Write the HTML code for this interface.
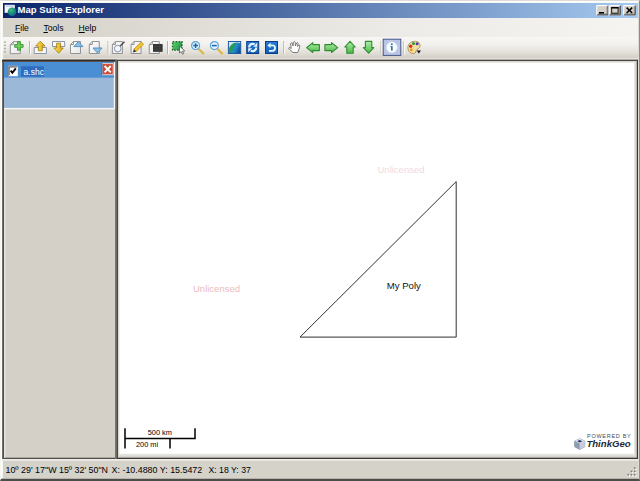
<!DOCTYPE html>
<html><head><meta charset="utf-8"><title>Map Suite Explorer</title>
<style>
html,body{margin:0;padding:0;}
body{width:640px;height:481px;overflow:hidden;background:#d4d0c8;position:relative;font-family:"Liberation Sans",sans-serif;font-size:8.6px;color:#000;}
.abs{position:absolute;}
#frame{left:0;top:0;width:640px;height:481px;background:#d5d2ca;box-sizing:border-box;border-style:solid;border-width:1px 1px 2px 1px;border-color:#dedbd6 #8e8c86 #4e4c48 #f4f4f0;}
#frame2{left:1px;top:1px;width:638px;height:478px;box-sizing:border-box;border:1px solid;border-color:#ffffff #dedbd5 #b4b2aa #ffffff;}
#title{left:3px;top:3px;width:634.5px;height:14.6px;background:linear-gradient(to right,#0a246a 0%,#a6caf0 100%);}
#title .t{left:14.6px;top:0;height:14.6px;line-height:14.6px;color:#fff;font-weight:bold;font-size:9.55px;white-space:nowrap;}
.cbtn{top:2px;width:12px;height:11px;background:#d4d0c8;box-shadow:inset 1px 1px 0 #fff,inset -1px -1px 0 #404040,inset -2px -2px 0 #808080;}
#menu{left:3px;top:17.6px;width:634.5px;height:20px;background:linear-gradient(to right,#d6d3cb 0%,#d9d6ce 14%,#edebe7 62%,#f5f4f1 100%);}
#menu span{position:absolute;top:0;height:20px;line-height:21px;font-size:8.6px;white-space:nowrap;}
#tool{left:3px;top:37.2px;width:634.5px;height:22.5px;background:linear-gradient(to bottom,#f8f7f5 0%,#f1f0ec 35%,#e4e1db 65%,#d4d0c8 90%,#d4d0c8 91%,#e3e0da 92%,#e3e0da 100%);}
#status{left:3px;top:459px;width:634px;height:20px;font-size:8.9px;white-space:nowrap;}
#status span{position:absolute;top:0;height:20px;line-height:22px;transform:scaleY(1.08);transform-origin:0 14px;}
</style></head><body>
<div id="frame" class="abs"></div><div id="frame2" class="abs"></div><div class="abs" style="left:2px;top:2px;width:636px;height:476px;box-sizing:border-box;border-left:1px solid #f6f6f2;border-top:1px solid #f8f8f6"></div>
<div id="title" class="abs"><span class="abs t">Map Suite Explorer</span>
<svg class="abs" style="left:0;top:0" width="634" height="15" viewBox="3 3 634 15">
<defs><radialGradient id="tg" cx="0.4" cy="0.3" r="0.8"><stop offset="0" stop-color="#44b886"/><stop offset="0.45" stop-color="#1c9474"/><stop offset="1" stop-color="#1a56a4"/></radialGradient></defs>
<rect x="4.6" y="4.8" width="10.2" height="8" fill="#f4f6fa"/><rect x="5.4" y="5.6" width="8.6" height="1" fill="#a8bcdc"/>
<circle cx="12" cy="11.8" r="4.3" fill="url(#tg)"/>
<g><rect x="596.3" y="5.1" width="12.1" height="10.2" fill="#d4d0c8"/><path d="M596.8,14.8V5.6H607.9" stroke="#fff" fill="none"/><path d="M597.3,14.8H607.9V5.6" stroke="#404040" fill="none"/><path d="M598,13.9H607V6.4" stroke="#808080" fill="none" stroke-width=".8"/><rect x="599" y="12" width="5" height="1.6" fill="#000"/></g>
<g><rect x="608.7" y="5.1" width="12.1" height="10.2" fill="#d4d0c8"/><path d="M609.2,14.8V5.6H620.3" stroke="#fff" fill="none"/><path d="M609.7,14.8H620.3V5.6" stroke="#404040" fill="none"/><path d="M610.4,13.9H619.4V6.4" stroke="#808080" fill="none" stroke-width=".8"/><rect x="611.7" y="7.6" width="6.4" height="5.6" fill="none" stroke="#000" stroke-width=".9"/><rect x="611.3" y="7" width="7.2" height="1.5" fill="#000"/></g>
<g><rect x="623.2" y="5.1" width="12.5" height="10.2" fill="#d4d0c8"/><path d="M623.7,14.8V5.6H635.2" stroke="#fff" fill="none"/><path d="M624.2,14.8H635.2V5.6" stroke="#404040" fill="none"/><path d="M624.9,13.9H634.3V6.4" stroke="#808080" fill="none" stroke-width=".8"/><path d="M626.6,7.6L632.2,13M632.2,7.6L626.6,13" stroke="#000" stroke-width="1.5"/></g>
</svg></div>
<div id="menu" class="abs"><span style="left:12px"><u>F</u>ile</span><span style="left:40.5px"><u>T</u>ools</span><span style="left:75.5px"><u>H</u>elp</span></div>
<div id="tool" class="abs"></div>
<!--TB0--><svg class="abs" id="tb" style="left:0;top:36px" width="640" height="26" viewBox="0 36 640 26">
<defs>
<linearGradient id="gy" x1="0" y1="0" x2="1" y2="0"><stop offset="0" stop-color="#fbe36a"/><stop offset="1" stop-color="#d9a30c"/></linearGradient>
<linearGradient id="gg" x1="0" y1="0" x2="0" y2="1"><stop offset="0" stop-color="#b0eea8"/><stop offset="1" stop-color="#4cb848"/></linearGradient>
<linearGradient id="gb" x1="0" y1="0" x2="0" y2="1"><stop offset="0" stop-color="#2a7cd6"/><stop offset="1" stop-color="#125cb4"/></linearGradient>
<linearGradient id="gd" x1="0" y1="0" x2="1" y2="1"><stop offset="0" stop-color="#ffffff"/><stop offset="1" stop-color="#e6e6e6"/></linearGradient>
<linearGradient id="gl" gradientUnits="userSpaceOnUse" x1="1.5" y1="5" x2="13" y2="11"><stop offset="0" stop-color="#2ea83c"/><stop offset="0.22" stop-color="#229c52"/><stop offset="0.5" stop-color="#2388d2"/><stop offset="1" stop-color="#0c3a82"/></linearGradient>
<linearGradient id="gs" x1="0" y1="0" x2="1" y2="0.4"><stop offset="0" stop-color="#5ad45a"/><stop offset="1" stop-color="#2a9a58"/></linearGradient><g id="doc"><path d="M3.5,0.5H10.5V12.5H0.5V3.5Z" fill="url(#gd)" stroke="#939393"/><path d="M0.5,3.5H3.5V0.5" fill="none" stroke="#939393"/></g>
<path id="arr" d="M0.3,4.9L6.4,0.3V1.9H13.2V8H6.4V9.5Z" fill="url(#gg)" stroke="#379537" stroke-width="0.9" stroke-linejoin="round"/>
<clipPath id="c12"><rect x="0.5" y="0.5" width="12.3" height="12"/></clipPath>
</defs>
<g fill="#a29e92"><rect x="4.2" y="41.4" width="1.5" height="1.5"/><rect x="4.2" y="44.6" width="1.5" height="1.5"/><rect x="4.2" y="47.8" width="1.5" height="1.5"/><rect x="4.2" y="51" width="1.5" height="1.5"/></g>
<path d="M29.5,41V54M108,41V54M167.5,41V54M283.7,41V54" stroke="#b8b4a8" fill="none"/><path d="M380.8,41V54M403.6,41V54" stroke="#c8c4ba" fill="none"/>
<path d="M30.5,41.5V54.5M109,41.5V54.5M168.5,41.5V54.5M284.7,41.5V54.5M381.8,41.5V54.5M404.6,41.5V54.5" stroke="#fff" fill="none" opacity=".8"/>
<!-- 1 add -->
<g transform="translate(9.8,41.2)"><use href="#doc"/><path d="M7.7,0.4H10.5V3.3H13.3V6.1H10.5V9H7.7V6.1H4.9V3.3H7.7Z" fill="#6ccf58" stroke="#36962c" stroke-width=".9" stroke-linejoin="round"/></g>
<!-- 2 up -->
<g transform="translate(33.7,41)"><path d="M0.5,6.5H12.7V12.5H0.5Z" fill="#f8f8f8" stroke="#8a94a6"/><path d="M6.6,0.2L11.3,5H8.6V9.8H4.6V5H1.9Z" fill="url(#gy)" stroke="#a47c08" stroke-width=".8" stroke-linejoin="round"/></g>
<!-- 3 down -->
<g transform="translate(52,41)"><path d="M0.5,0.5H12.7V5.5H0.5Z" fill="#f8f8f8" stroke="#8a94a6"/><path d="M4.6,2.2H8.6V7H11.3L6.6,12.2L1.9,7H4.6Z" fill="url(#gy)" stroke="#a47c08" stroke-width=".8" stroke-linejoin="round"/></g>
<!-- 4 doc up -->
<g transform="translate(70,41)"><use href="#doc"/><path d="M3.8,5.6L8.4,0.7L13,5.6Z" fill="#8fc0e4" stroke="#4a8cc2" stroke-width=".9" stroke-linejoin="round"/></g>
<!-- 5 doc down -->
<g transform="translate(88.8,41)"><use href="#doc"/><path d="M4.2,7L13.2,7L8.7,12Z" fill="#8fc0e4" stroke="#4a8cc2" stroke-width=".9" stroke-linejoin="round"/></g>
<!-- 6 doc find -->
<g transform="translate(111.9,41)"><use href="#doc"/><circle cx="5.8" cy="7.6" r="3.3" fill="#f4f8fc" stroke="#8796a8" stroke-width="1"/><path d="M8.3,5L12.6,0.8" stroke="#4a4a4a" stroke-width="1.4"/></g>
<!-- 7 doc edit -->
<g transform="translate(130.6,41)"><use href="#doc"/><path d="M10.6,1L13,3.2L5.6,10.4L3.2,8.2Z" fill="#f4c430" stroke="#b38a10" stroke-width=".7"/><path d="M3.2,8.2L5.6,10.4L2.4,11.4Z" fill="#2a2a2a"/></g>
<!-- 8 doc black -->
<g transform="translate(148.8,41)"><use href="#doc"/><rect x="4.2" y="3" width="9.6" height="7.8" fill="#333"/><path d="M7.4,3V10.8M10.6,3V10.8M4.2,5.6H13.8M4.2,8.2H13.8" stroke="#4a4a4a" stroke-width=".6"/></g>
<!-- 9 select -->
<g transform="translate(171.9,41)"><rect x="0.7" y="0.7" width="9.4" height="8.4" fill="url(#gs)" stroke="#1c5c22" stroke-width="1.3" stroke-dasharray="1.6 1.4"/><path d="M7.6,5L7.6,12L9.3,10.6L10.6,13.2L11.8,12.6L10.6,10.1L12.8,9.9Z" fill="#fff" stroke="#555" stroke-width=".8" stroke-linejoin="round"/></g>
<!-- 10 zoom in -->
<g transform="translate(190.6,41)"><path d="M8,8L12.6,12.4" stroke="#e0b852" stroke-width="2.4" stroke-linecap="round"/><circle cx="5" cy="4.6" r="4" fill="#e2f1fb" stroke="#5ea4d6" stroke-width="1.2"/><path d="M2.6,4.6H7.4M5,2.2V7" stroke="#1668b0" stroke-width="1.5"/></g>
<!-- 11 zoom out -->
<g transform="translate(209.4,41)"><path d="M8,8L12.6,12.4" stroke="#e0b852" stroke-width="2.4" stroke-linecap="round"/><circle cx="5" cy="4.6" r="4" fill="#e2f1fb" stroke="#5ea4d6" stroke-width="1.2"/><path d="M2.6,4.6H7.4" stroke="#1668b0" stroke-width="1.5"/></g>
<!-- 12 globe -->
<g transform="translate(227.9,41)"><rect x="0.5" y="0.5" width="12.3" height="12" fill="#d4e6f6"/><circle cx="9" cy="10" r="8.4" fill="url(#gl)" clip-path="url(#c12)"/><rect x="0.5" y="0.5" width="12.3" height="12" fill="none" stroke="#1f5aa2"/></g>
<!-- 13 refresh -->
<g transform="translate(246.2,41)"><rect x="0.5" y="0.5" width="12" height="12" fill="url(#gb)" stroke="#0c3c88" stroke-width="1"/><path d="M2.9,6.4A3.6,3.6 0 0 1 8.4,3.4" fill="none" stroke="#e4f6ff" stroke-width="2.2"/><path d="M10.1,6.6A3.6,3.6 0 0 1 4.6,9.6" fill="none" stroke="#e4f6ff" stroke-width="2.2"/><path d="M7,5.8H11V1.8Z" fill="#e4f6ff"/><path d="M6,7.2H2V11.2Z" fill="#e4f6ff"/></g>
<!-- 14 undo -->
<g transform="translate(265,41)"><rect x="0.5" y="0.5" width="12" height="12" fill="url(#gb)" stroke="#0c3c88" stroke-width="1"/><path d="M4.6,4.4H7.4A2.7,2.7 0 0 1 7.4,9.8H4" fill="none" stroke="#dff6ff" stroke-width="1.8"/><path d="M5.6,1.8L2.4,4.4L5.6,7Z" fill="#dff6ff"/></g>
<!-- 15 hand -->
<g transform="translate(288,41)"><path d="M5,11.5L3,9.6L0.5,7.6L1.2,6.5L3.3,7.4L2.5,3L3.2,1.8L4.3,2.2L5,5L5.4,1.2L6.4,0.4L7.2,1.2L7.4,5L8.6,2L9.4,1.6L10,2.4L9.5,5.6L10.8,4L11.6,4.2L11.8,5L10.8,8.6L9.6,11.5Z" fill="#fff" stroke="#6e6e6e" stroke-width=".9" stroke-linejoin="round"/></g>
<!-- 16-19 arrows -->
<g fill="url(#gg)" stroke="#2f8c2f" stroke-width="1.1" stroke-linejoin="round">
<path transform="translate(306.2,42.3)" d="M0.4,5.3L6.6,0.4V2.3H13.2V8.3H6.6V10.2Z"/>
<path transform="translate(338.1,42.3) scale(-1,1)" d="M0.4,5.3L6.6,0.4V2.3H13.2V8.3H6.6V10.2Z"/>
<path transform="translate(344.4,41)" d="M5.6,0.4L10.8,6H8.8V12.2H2.4V6H0.4Z"/>
<path transform="translate(363,41)" d="M2.4,0.4H8.8V6.6H10.8L5.6,12.2L0.4,6.6H2.4Z"/>
</g>
<!-- 20 info -->
<g><rect x="383.2" y="39.2" width="17.6" height="16.2" fill="#b9c5e4" stroke="#47558a" stroke-width="1"/><circle cx="391.8" cy="47.3" r="5.5" fill="#fbfdff" stroke="#cfdaee" stroke-width=".8"/><rect x="391" y="46.2" width="1.7" height="4.4" fill="#2a78a8"/><rect x="390.4" y="46.2" width="1.6" height=".9" fill="#2a78a8"/><circle cx="391.8" cy="44.2" r="1" fill="#2a78a8"/></g>
<!-- 21 palette -->
<g transform="translate(407.5,41)"><path d="M7,0.3C10.8,0.3 12.8,2.4 12.6,5C12.4,7.4 10.4,7.6 9.2,8.6C8,9.8 9,12.6 6,12.6C2.8,12.6 0.4,10 0.4,6.8C0.4,3.2 3.2,0.3 7,0.3Z" fill="#f3dfa6" stroke="#a4864e" stroke-width=".8"/><circle cx="3.2" cy="5.2" r="1.7" fill="#d23420"/><circle cx="6" cy="2.4" r="1.5" fill="#2e9a2e"/><circle cx="9.6" cy="2.8" r="1.5" fill="#4c3cb0"/><circle cx="3.8" cy="8.8" r="1.5" fill="#ec9a18"/><path d="M9.1,9.6H13.5L11.3,12.4Z" fill="#111"/></g>
</svg>
<!--TB1-->
<svg class="abs" id="panes" style="left:0;top:0" width="640" height="481" viewBox="0 0 640 481">
<!-- left panel -->
<rect x="2.2" y="59.7" width="114.3" height="399.3" fill="#504e4a"/><rect x="2.2" y="59.7" width="114.3" height="1.5" fill="#2e2c2a"/>
<rect x="2.3" y="61.2" width="113" height="1" fill="#5a5856"/>
<rect x="115" y="59.7" width="1.5" height="399.3" fill="#6e6c68"/>
<rect x="4" y="62" width="111.1" height="395.7" fill="#d4d0c8"/><rect x="4" y="109.4" width="1.4" height="348.3" fill="#e4e3de"/>
<rect x="4" y="62" width="111.1" height="47.4" fill="#f4f6f8"/>
<rect x="4" y="62" width="109.8" height="45.9" fill="#9cb8d8"/>
<rect x="4" y="62" width="109.8" height="15.7" fill="#4a8ed4"/>
  <rect x="8" y="65.8" width="9.8" height="10.4" fill="#fff"/><path d="M8.4,76.2V66.2H17.8" fill="none" stroke="#7a7a7a" stroke-width=".8"/><path d="M9.2,75.4V67H17" fill="none" stroke="#3a3a3a" stroke-width=".8"/>
  <path d="M10.6,70.6L12.4,72.8L15.8,68.4" fill="none" stroke="#000" stroke-width="1.9"/>
  <rect x="21" y="66.3" width="23" height="10.3" fill="#2e6cc0"/>
  <text x="23.6" y="74.8" font-family="Liberation Sans, sans-serif" font-size="8.5" fill="#fff">a.shc</text>
  <rect x="102.2" y="63.6" width="11" height="11.1" fill="#cc4a36" stroke="#ecd0c8" stroke-width="1"/><path d="M101.9,63.2V75" stroke="#2a3c70" stroke-width=".8"/>
  <path d="M104.6,66L110.8,72.4M110.8,66L104.6,72.4" stroke="#fff" stroke-width="1.9"/>
 
<!-- map -->
<rect x="116.7" y="59.7" width="521.3" height="399.3" fill="#3a3836"/>
<rect x="117.9" y="60.9" width="518.9" height="396.8" fill="#d6d4cd"/>
<rect x="118.7" y="61.8" width="516.5" height="393.8" fill="#e6e4df"/>
<rect x="119.5" y="62.8" width="514.4" height="391" fill="#fff"/>
<polygon points="300,337.1 456.2,337.1 456.2,181.6" fill="none" stroke="#303030" stroke-width="1" stroke-linejoin="miter"/>
<text x="386.7" y="288.6" font-family="Liberation Sans, sans-serif" font-size="9.6" fill="#111">My Poly</text>
<text x="377.5" y="173" font-family="Liberation Sans, sans-serif" font-size="9.5" fill="#f1d9df">Unlicensed</text>
<text x="193" y="292" font-family="Liberation Sans, sans-serif" font-size="9.5" fill="#ecbcbc">Unlicensed</text>
<g stroke="#000" stroke-width="1.5" fill="none"><path d="M125,428.3V448.5M124.3,438.5H195.7M195,428.3V439.2M170,438.5V448.5"/></g>
<text x="159.8" y="434.5" text-anchor="middle" font-family="Liberation Sans, sans-serif" font-size="7.4" fill="#000">500 km</text>
<text x="147" y="447.3" text-anchor="middle" font-family="Liberation Sans, sans-serif" font-size="7.4" fill="#000">200 mi</text>
<text x="587" y="437.8" font-family="Liberation Sans, sans-serif" font-size="5.5" letter-spacing="0.72" fill="#3c4c5e">POWERED BY</text>
<text x="586.4" y="447.4" font-family="Liberation Sans, sans-serif" font-size="9.6" font-weight="bold" font-style="italic" fill="#1c2c40">ThinkGeo</text>
<g transform="translate(574.4,438.4)"><path d="M5.3,0.3L10.4,2.6V8.4L5.3,11.1L0.3,8.4V2.6Z" fill="#aab4c8" stroke="#76829c" stroke-width=".6"/><path d="M5.3,5.2V11.1L0.3,8.4V2.6Z" fill="#8e9ab4"/><path d="M5.3,5.2V11.1L10.4,8.4V2.6Z" fill="#c6cede"/><path d="M5.3,0.3L10.4,2.6L5.3,5.2L0.3,2.6Z" fill="#dfe4ee"/><path d="M5.3,1.6L8,2.8L5.3,4.2L2.6,2.8Z" fill="#2a3a6c"/></g>

</svg>
<div class="abs" style="left:2px;top:459px;width:636px;height:2px;background:linear-gradient(to bottom,#f1f0ec,#e4e2dc)"></div>
<svg class="abs" style="left:620px;top:460px" width="20" height="21" viewBox="620 460 20 21"><g fill="#fff"><rect x="635" y="468.4" width="1.5" height="1.5"/><rect x="631.8" y="471.7" width="1.5" height="1.5"/><rect x="635" y="471.7" width="1.5" height="1.5"/><rect x="628.6" y="475" width="1.5" height="1.5"/><rect x="631.8" y="475" width="1.5" height="1.5"/><rect x="635" y="475" width="1.5" height="1.5"/></g><g fill="#7c7a72"><rect x="633.9" y="467.3" width="1.6" height="1.6"/><rect x="630.7" y="470.6" width="1.6" height="1.6"/><rect x="633.9" y="470.6" width="1.6" height="1.6"/><rect x="627.5" y="473.9" width="1.6" height="1.6"/><rect x="630.7" y="473.9" width="1.6" height="1.6"/><rect x="633.9" y="473.9" width="1.6" height="1.6"/></g></svg>
<div id="status" class="abs"><span style="left:2.5px">10º 29' 17"W 15º 32' 50"N</span><span style="left:108.6px">X: -10.4880 Y: 15.5472</span><span style="left:205.5px;font-size:8.7px">X: 18 Y: 37</span></div>
</body></html>
